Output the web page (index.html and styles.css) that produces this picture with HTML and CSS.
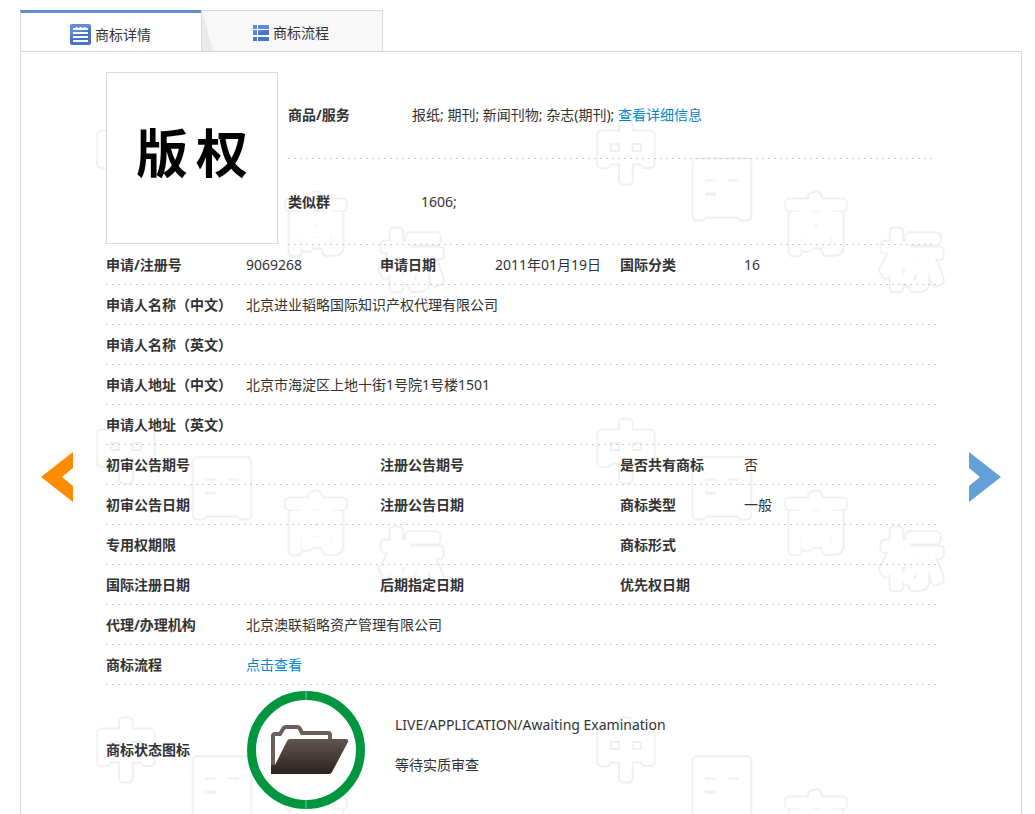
FILE: index.html
```html
<!DOCTYPE html>
<html lang="zh-CN">
<head>
<meta charset="utf-8">
<title>商标详情</title>
<link rel="stylesheet" href="styles.css">
</head>
<body>
<div class="page">
  <nav class="tabs">
    <a class="tab tab-active" href="#detail">
      <svg class="icon-note" viewBox="0 0 21 21" aria-hidden="true">
        <defs><linearGradient id="blue" x1="0" y1="0" x2="0.4" y2="1"><stop offset="0.45" stop-color="#5f8bd3"/><stop offset="0.6" stop-color="#4673c8"/></linearGradient></defs>
        <rect width="21" height="21" rx="2" fill="url(#blue)"/>
        <path d="M3 5h15M3 9h15M3 13h15M3 17h15M6.5 3v2M10.5 3v2M14.5 3v2" stroke="#fff" stroke-width="2"/>
      </svg>
      商标详情
    </a>
    <a class="tab tab-plain" href="#flow">
      <svg class="icon-list" viewBox="0 0 16 16" aria-hidden="true">
        <path d="M0 0h4v4H0zM5 0h11v4H5zM0 5h4v5H0zM5 5h11v5H5zM0 12h4v4H0zM5 12h11v4H5z" fill="url(#blue)"/>
      </svg>
      商标流程
    </a>
  </nav>
  <main class="panel" id="detail">
    <svg class="watermark" aria-hidden="true">
      <defs>
        <pattern id="marks" width="500" height="299" patternUnits="userSpaceOnUse">
          <g class="mark-edge"><text x="75" y="123">中</text><text x="171" y="159">国</text><text x="265" y="195">商</text><text x="361" y="231">标</text></g>
          <g class="mark-body"><text x="75" y="123">中</text><text x="171" y="159">国</text><text x="265" y="195">商</text><text x="361" y="231">标</text></g>
        </pattern>
      </defs>
      <rect width="100%" height="100%" fill="url(#marks)"/>
    </svg>
    <button class="arrow" type="button" aria-label="上一条">
      <svg viewBox="0 0 32 50"><path d="M0 25L32 0v16L21 25l11 9v16z" fill="#ff8c00"/></svg>
    </button>
    <div class="content">
      <div class="summary">
        <div class="picture"><span>版</span><span>权</span></div>
        <table class="summary-table">
          <tr><th scope="row">商品/服务</th><td>报纸; 期刊; 新闻刊物; 杂志(期刊); <a href="#goods">查看详细信息</a></td></tr>
          <tr><th scope="row">类似群</th><td class="indent">1606;</td></tr>
        </table>
      </div>
      <table class="info">
        <colgroup><col class="c1"><col class="c2"><col class="c3"><col class="c4"><col class="c5"><col></colgroup>
        <tr><th scope="row">申请/注册号</th><td>9069268</td><th scope="row">申请日期</th><td>2011年01月19日</td><th scope="row">国际分类</th><td>16</td></tr>
        <tr><th scope="row">申请人名称（中文）</th><td colspan="5">北京进业韬略国际知识产权代理有限公司</td></tr>
        <tr><th scope="row">申请人名称（英文）</th><td colspan="5"></td></tr>
        <tr><th scope="row">申请人地址（中文）</th><td colspan="5">北京市海淀区上地十街1号院1号楼1501</td></tr>
        <tr><th scope="row">申请人地址（英文）</th><td colspan="5"></td></tr>
        <tr><th scope="row">初审公告期号</th><td></td><th scope="row">注册公告期号</th><td></td><th scope="row">是否共有商标</th><td>否</td></tr>
        <tr><th scope="row">初审公告日期</th><td></td><th scope="row">注册公告日期</th><td></td><th scope="row">商标类型</th><td>一般</td></tr>
        <tr><th scope="row">专用权期限</th><td></td><td></td><td></td><th scope="row">商标形式</th><td></td></tr>
        <tr><th scope="row">国际注册日期</th><td></td><th scope="row">后期指定日期</th><td></td><th scope="row">优先权日期</th><td></td></tr>
        <tr><th scope="row">代理/办理机构</th><td colspan="5">北京澳联韬略资产管理有限公司</td></tr>
        <tr><th scope="row">商标流程</th><td colspan="5"><a href="#flow">点击查看</a></td></tr>
        <tr class="last"><th scope="row">商标状态图标</th><td colspan="5">
          <div class="status">
            <svg class="status-icon" viewBox="0 0 118 118" aria-hidden="true">
              <defs><linearGradient id="folder" x1="0" y1="0" x2="0" y2="1"><stop offset="0" stop-color="#625550"/><stop offset="1" stop-color="#2a221f"/></linearGradient></defs>
              <circle cx="59" cy="59" r="54.5" fill="#fff" stroke="#009640" stroke-width="9"/>
              <path d="M59 0v9M59 109v9" stroke="#7cc89b"/>
              <path d="M26 80V45q0-2 2-2h5l3-5q1-2 3-2h11q2 0 3 2l2 4h26q2 0 2 2v6" fill="none" stroke="#6c5f59" stroke-width="4"/>
              <path d="M24 83V74h4L40 50q1-2 3-2h56q3 0 2 3L85 81q-1 2-3 2z" fill="url(#folder)"/>
            </svg>
            <div class="status-text"><div>LIVE/APPLICATION/Awaiting Examination</div><div>等待实质审查</div></div>
          </div>
        </td></tr>
      </table>
    </div>
    <button class="arrow" type="button" aria-label="下一条">
      <svg viewBox="0 0 32 50"><path d="M32 25L0 0v16l11 9-11 9v16z" fill="#64a0d8"/></svg>
    </button>
  </main>
</div>
</body>
</html>
```
FILE: styles.css
```css
* { box-sizing: border-box; }
body {
  margin: 0;
  background: #fff;
  color: #333;
  font: 14px/20px "Noto Sans", "Noto Sans CJK SC", sans-serif;
}
a { color: #08c; text-decoration: none; }
.page {
  display: flex;
  flex-direction: column;
  min-height: 100vh;
  padding: 10px 13px 0 20px;
}
.tabs { display: flex; }
.tab {
  display: flex;
  align-items: center;
  gap: 4px;
  height: 41px;
  border: 1px solid #d9d9d9;
  border-bottom: 0;
  color: #333;
}
.tab-active {
  width: 181px;
  padding: 5px 0 0 49px;
  border-top: 3px solid #5f8bd3;
  border-right: 0;
}
.tab-plain {
  width: 182px;
  padding: 3px 0 0 51px;
  background: linear-gradient(75deg, #ebebeb 10px, #f8f8f8 11px);
}
.icon-note { width: 21px; height: 21px; }
.icon-list { width: 16px; height: 16px; }
.panel {
  position: relative;
  display: flex;
  flex: 1;
  align-items: flex-start;
  gap: 33px;
  padding: 20px 20px 0;
  border: 1px solid #d9d9d9;
  border-bottom: 0;
}
.watermark {
  position: absolute;
  inset: 0;
  z-index: -1;
  width: 100%;
  height: 100%;
}
.watermark text {
  font: 400 60px "Noto Sans CJK SC", sans-serif;
  stroke-linejoin: round;
}
.mark-edge { fill: #f0f0f0; stroke: #f0f0f0; stroke-width: 11px; }
.mark-body { fill: #fff; stroke: #fff; stroke-width: 7px; }
.arrow {
  flex: none;
  width: 32px;
  height: 50px;
  margin-top: 380px;
  padding: 0;
  border: 0;
  background: none;
  cursor: pointer;
}
.arrow svg { display: block; width: 32px; height: 50px; }
.content { flex: 1; min-width: 0; }
.summary { display: flex; gap: 10px; }
.picture {
  display: flex;
  flex: none;
  align-items: center;
  justify-content: center;
  gap: 8px;
  width: 172px;
  height: 172px;
  padding-bottom: 14px;
  border: 1px solid #d9d9d9;
  background: #fff;
  color: #000;
  font: 700 52px/60px "Noto Sans CJK SC", sans-serif;
}
table { width: 100%; border-collapse: collapse; table-layout: fixed; }
th, td { padding: 0; text-align: left; }
th { font-weight: 700; white-space: nowrap; }
tr {
  background: repeating-linear-gradient(90deg, #ccc 0 2px, transparent 2px 6px) left bottom / 100% 1px no-repeat;
}
.summary { height: 173px; }
.summary-table { flex: 1; }
.summary-table tr { height: 86px; }
.summary-table th { width: 124px; }
.summary-table .indent { padding-left: 9px; }
.info tr { height: 40px; }
.info .last { height: 130px; background: none; }
.c1 { width: 140px; }
.c2 { width: 134px; }
.c3 { width: 115px; }
.c4 { width: 125px; }
.c5 { width: 124px; }
.status { display: flex; align-items: center; gap: 30px; padding-left: 1px; }
.status-icon { flex: none; width: 118px; height: 118px; }
.status-text { display: grid; gap: 20px; padding-bottom: 10px; }
```
